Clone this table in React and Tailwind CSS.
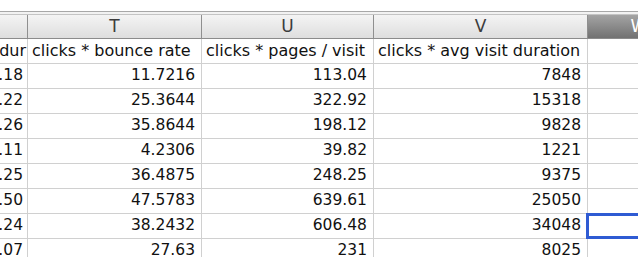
const columns = [
  { key: "S", width: "w-[28px]", label: "" },
  { key: "T", width: "w-[174px]", label: "T" },
  { key: "U", width: "w-[172px]", label: "U" },
  { key: "V", width: "w-[214px]", label: "V" },
];

const titles = ["clicks * avg visit dur", "clicks * bounce rate", "clicks * pages / visit", "clicks * avg visit duration"];

const rows = [
  ["0.18", "11.7216", "113.04", "7848"],
  ["0.22", "25.3644", "322.92", "15318"],
  ["0.26", "35.8644", "198.12", "9828"],
  ["0.11", "4.2306", "39.82", "1221"],
  ["0.25", "36.4875", "248.25", "9375"],
  ["0.50", "47.5783", "639.61", "25050"],
  ["0.24", "38.2432", "606.48", "34048"],
  ["0.07", "27.63", "231", "8025"],
];

const SELECTED_ROW = 6;

const App = () => {
  return (
    <div className="w-[638px] h-[257px] overflow-hidden bg-white font-['DejaVu_Sans',sans-serif] text-[#111]">
      <div className="h-[11px]" />
      <div className="h-px bg-[#a8a8a8]" />
      <div className="h-[2px] bg-[#f2f2f2]" />

      {/* column letters */}
      <div className="flex h-[25px] w-[740px] border-t border-b border-t-[#c4c4c4] border-b-[#8c8c8c] bg-gradient-to-b from-[#f4f4f4] to-[#dedede]">
        {columns.map((col) => (
          <div
            key={col.key}
            className={`${col.width} shrink-0 border-r border-[#8f8f8f] flex items-center justify-center text-[17px] leading-none text-[#3c3c3c]`}
          >
            {col.label}
          </div>
        ))}
        <div className="w-[102px] shrink-0 flex items-center justify-center bg-gradient-to-b from-[#a4a4a4] to-[#727272] text-[17px] leading-none text-white">
          W
        </div>
      </div>

      {/* header text row */}
      <div className="flex h-[25px] w-[740px] border-b border-[#d0d0d0]">
        <div className="w-[28px] shrink-0 border-r border-[#d0d0d0] overflow-hidden flex items-center justify-end pr-[1px] text-[16px] whitespace-nowrap">
          {titles[0]}
        </div>
        {[1, 2, 3].map((i) => (
          <div
            key={i}
            className={`${columns[i].width} shrink-0 border-r border-[#d0d0d0] overflow-hidden flex items-center pl-[4px] text-[16px] whitespace-nowrap`}
          >
            {titles[i]}
          </div>
        ))}
        <div className="w-[102px] shrink-0" />
      </div>

      {rows.map((row, r) => (
        <div key={r} className="flex h-[25px] w-[740px] border-b border-[#d0d0d0]">
          {row.map((val, c) => (
            <div
              key={c}
              className={`${columns[c].width} shrink-0 border-r border-[#d0d0d0] overflow-hidden flex items-center justify-end ${c === 0 ? "pr-[4px]" : "pr-[6px]"} text-[15.5px] whitespace-nowrap`}
            >
              {val}
            </div>
          ))}
          <div className="w-[102px] shrink-0 relative">
            {r === SELECTED_ROW && (
              <div className="absolute -left-[2px] -top-[1px] -bottom-[1px] right-0 border-[3px] border-[#2f5bd3]" />
            )}
          </div>
        </div>
      ))}
    </div>
  );
};

export default App;
